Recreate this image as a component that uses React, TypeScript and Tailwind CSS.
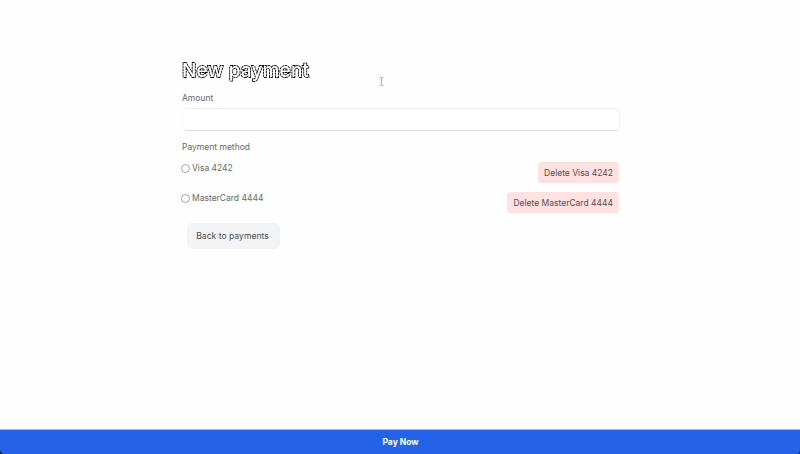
const methods = [
  { id: 'visa', label: 'Visa 4242' },
  { id: 'mastercard', label: 'MasterCard 4444' },
];

export default function App() {
  return (
    <div className="flex h-[454px] flex-col overflow-hidden bg-[#fefefe] font-['Inter',sans-serif] text-[8.5px] leading-3 text-[#686868] antialiased">
      <main className="ml-[182px] flex w-[438px] grow flex-col pt-[57px]">
        <h1 className="h-[26px] self-start opacity-[0.99] grayscale">
          <svg
            className="overflow-visible"
            width="130"
            height="26"
            fill="#fff"
            stroke="#000"
            strokeWidth="1.8"
            strokeDasharray="2.4 0.5"
            paintOrder="stroke"
          >
            <text x="0" y="20" textLength="127" className="text-[19px] font-medium">
              New payment
            </text>
          </svg>
        </h1>
        <label htmlFor="amount" className="mt-[9px]">Amount</label>
        <input
          id="amount"
          className="mt-[4px] h-[23px] w-full rounded-[5px] border border-[#efefef] border-b-[#dedede] border-l-[#fafafa] bg-white px-2 outline-none"
        />
        <div className="mt-[10px]">Payment method</div>
        <div className="mt-[9px] flex flex-col gap-[9px]">
          {methods.map((m) => (
            <div key={m.id} className="flex h-[21px] items-start justify-between pr-px">
              <label className="flex items-center gap-[2px]">
                <input
                  type="radio"
                  name="method"
                  className="-ml-px size-[9px] appearance-none rounded-full border border-[#a3a3a3] bg-white"
                />
                {m.label}
              </label>
              <button className="h-[21px] rounded-[4px] bg-[#fee1e1] px-[6px] text-[#65494b]">
                Delete {m.label}
              </button>
            </div>
          ))}
        </div>
        <button className="mt-[10px] ml-[5px] h-[26px] w-[93px] self-start rounded-[5px] bg-[#f3f4f6] pr-[8px] pl-[6px] text-[8.6px] whitespace-nowrap text-[#4b4c50]">
          Back to payments
        </button>
      </main>
      <button className="h-[25px] w-full border-t border-[#9ab5ee] bg-[#2463e8] pl-px font-bold text-white">
        Pay Now
      </button>
      <svg className="absolute top-[77px] left-[379px]" width="5" height="9" fill="none" stroke="#999" strokeWidth="0.8">
        <path d="M0.5 0.5h1.3l0.7 0.6 0.7-0.6h1.3M2.5 1v7M0.5 8.5h1.3l0.7-0.6 0.7 0.6h1.3" />
      </svg>
      <svg className="absolute top-[449px] left-0" width="4" height="5" fill="#18223c">
        <path d="M0 0Q0.5 4.5 4 5H0Z" />
      </svg>
      <svg className="absolute top-[451px] left-[797px]" width="3" height="3" fill="#18223c">
        <path d="M3 0Q2.5 2.5 0 3H3Z" />
      </svg>
    </div>
  );
}
